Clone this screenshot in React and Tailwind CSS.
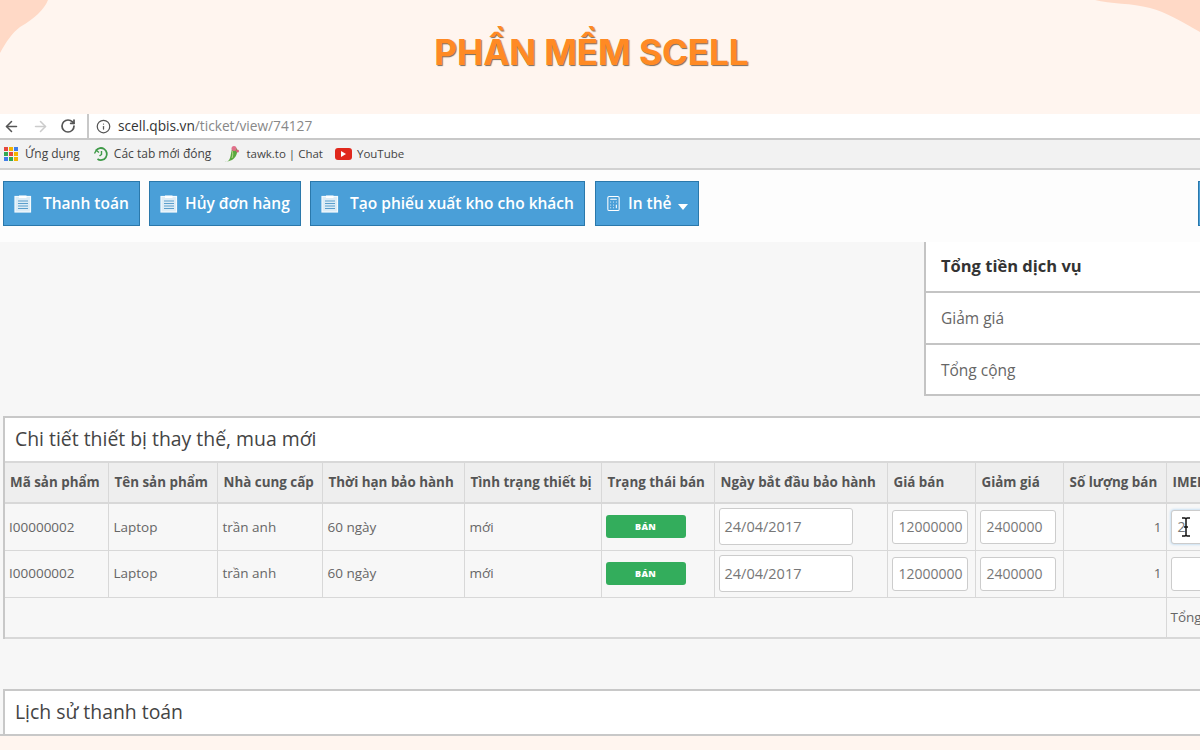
import { ArrowLeft, ArrowRight, Calculator, Info, RotateCw } from "lucide-react";

const columns = [103, 109, 105, 142, 137, 113, 173, 88, 88, 103, 140];
const headers = [
  "Mã sản phẩm",
  "Tên sản phẩm",
  "Nhà cung cấp",
  "Thời hạn bảo hành",
  "Tình trạng thiết bị",
  "Trạng thái bán",
  "Ngày bắt đầu bảo hành",
  "Giá bán",
  "Giảm giá",
  "Số lượng bán",
  "IMEI",
];
const actions = [
  { label: "Thanh toán", width: "w-[137px]", gap: "gap-[11px]" },
  { label: "Hủy đơn hàng", width: "w-[152px]", gap: "gap-[7px]" },
  { label: "Tạo phiếu xuất kho cho khách", width: "w-[275px]", gap: "gap-[11px]" },
];
const appColors = ["#e5483d", "#f4b400", "#3f7de8", "#34a853", "#e5483d", "#f4b400", "#3f7de8", "#34a853", "#f4b400"];

const ClipboardIcon = () => (
  <svg width="18" height="18" viewBox="0 0 18 18" fill="none" className="shrink-0">
    <rect x="1" y="1.5" width="15.5" height="15.5" fill="#dcecf6" stroke="#f4fafd" strokeWidth="1.2" />
    <rect x="5" y="0.5" width="7.5" height="2.5" fill="#ffffff" />
    <path d="M4 6h10M4 8.5h10M4 11h10M4 13.5h10" stroke="#5b9fcc" strokeWidth="1" />
  </svg>
);

const AppsIcon = () => (
  <div className="grid w-[14px] grid-cols-3 gap-[1px]">
    {appColors.map((color, i) => (
      <span key={i} className="h-[4px] w-[4px]" style={{ backgroundColor: color }} />
    ))}
  </div>
);

const HistoryIcon = () => (
  <svg width="16" height="16" viewBox="0 0 16 16" fill="none" stroke="#3f9a48" strokeWidth="1.8" className="shrink-0">
    <path d="M3 4.5A6 6 0 1 1 4.5 13" />
    <path d="M1.5 7.5 3.2 4.3 6 6.5" strokeWidth="1.4" />
    <path d="M8.5 5v3.5L6.5 10" strokeWidth="1.4" />
  </svg>
);

const TawkIcon = () => (
  <svg width="18" height="18" viewBox="0 0 18 18" className="shrink-0">
    <path d="M1 17c3 0 5-1 6-4 1-3 1-6 2-9 1-2 4-2 5 0 1 3-1 9-5 11-3 1-6 2-8 2Z" fill="#5aa83f" />
    <circle cx="11" cy="3.5" r="2.5" fill="#e0708a" />
    <circle cx="14.5" cy="6" r="1.5" fill="#d95f7f" />
    <path d="M9 6c1 2 1 4 0 7" stroke="#b9d98a" strokeWidth="1" fill="none" />
  </svg>
);

const YoutubeIcon = () => (
  <span className="flex h-[12px] w-[17px] shrink-0 items-center justify-center rounded-[3px] bg-[#e0281c]">
    <span className="h-0 w-0 border-y-[3px] border-l-[5px] border-y-transparent border-l-white" />
  </span>
);

const TextBox = ({ value, className }) => (
  <div className={`flex items-center rounded-[3px] border border-[#ccc] bg-white text-[#777] ${className}`}>
    {value}
  </div>
);

const Row = ({ focused }) => {
  const cell = "border-r border-b border-[#d8d8d8] align-middle text-[13.5px] text-[#666]";
  const textCell = `${cell} pl-[5px]`;
  const boxCell = `${cell} pl-[4px]`;
  return (
    <tr className="h-[47px]">
      <td className={`${cell} pl-[4px]`}>I00000002</td>
      <td className={textCell}>Laptop</td>
      <td className={textCell}>trần anh</td>
      <td className={textCell}>60 ngày</td>
      <td className={textCell}>mới</td>
      <td className={boxCell}>
        <div className="flex h-[23px] w-[80px] items-center justify-center rounded-[3px] bg-[#33ad5c] text-[9px] font-extrabold tracking-wide text-white">
          BÁN
        </div>
      </td>
      <td className={boxCell}>
        <TextBox value="24/04/2017" className="h-[37px] w-[134px] pl-[5px] text-[14.5px]" />
      </td>
      <td className={boxCell}>
        <TextBox value="12000000" className="h-[34px] w-[76px] pl-[6px] text-[14px]" />
      </td>
      <td className={boxCell}>
        <TextBox value="2400000" className="h-[34px] w-[76px] pl-[6px] text-[14px]" />
      </td>
      <td className={`${cell} pr-[4px] text-right`}>1</td>
      <td className={boxCell}>
        <TextBox
          value={focused ? "2" : ""}
          className={`h-[34px] w-[100px] pl-[6px] text-[14px] ${focused ? "border-[#7db4e6] shadow-[0_0_3px_#9cc8ee]" : ""}`}
        />
      </td>
    </tr>
  );
};

export default function App() {
  return (
    <div className="relative h-[750px] w-[1200px] overflow-hidden bg-[#fff5ef] font-['Open_Sans',sans-serif]">
      {/* corner blobs */}
      <svg width="60" height="60" viewBox="0 0 60 60" className="absolute left-0 top-0">
        <path d="M0 0H48C44 10 34 19 20 27 12 33 6 42 0 53Z" fill="#ffd9c6" />
      </svg>
      <svg width="110" height="40" viewBox="0 0 110 40" className="absolute right-0 top-0">
        <path d="M5 0C20 4 42 3 60 8 76 12 92 22 110 32V0Z" fill="#ffd9c6" />
      </svg>

      <div className="flex h-[114px] items-start justify-center pr-[17px] pt-[30px]">
        <h1 className="font-['Inter',sans-serif] text-[35px] leading-[44px] font-bold text-[#ff8a24] [text-shadow:1px_1px_1px_#7a6a5a]">
          PHẦN MỀM SCELL
        </h1>
      </div>

      {/* browser chrome */}
      <div className="flex h-[26px] items-center border-b-2 border-[#c8c8c8] bg-white">
        <div className="flex h-full w-[89px] items-center border-r-2 border-[#c8c8c8] pl-[3px] text-[#555]">
          <ArrowLeft size={17} strokeWidth={2.2} />
          <ArrowRight size={17} strokeWidth={2.2} className="ml-[12px] text-[#ccc]" />
          <RotateCw size={16} strokeWidth={2.6} className="ml-[11px]" />
        </div>
        <Info size={15} className="ml-[7px] text-[#555]" />
        <span className="ml-[7px] text-[13.7px] text-[#333]">
          scell.qbis.vn<span className="text-[#888]">/ticket/view/74127</span>
        </span>
      </div>
      <div className="flex h-[30px] items-center border-b-2 border-[#d2d2d2] bg-[#f2f2f2] pl-[4px] text-[12px] text-[#444]">
        <AppsIcon />
        <span className="ml-[7px]">Ứng dụng</span>
        <span className="ml-[13px]"><HistoryIcon /></span>
        <span className="ml-[5px]">Các tab mới đóng</span>
        <span className="ml-[12px]"><TawkIcon /></span>
        <span className="ml-[5px] text-[11.5px]">tawk.to | Chat</span>
        <span className="ml-[12px]"><YoutubeIcon /></span>
        <span className="ml-[5px] text-[11.5px]">YouTube</span>
      </div>

      {/* action bar */}
      <div className="flex h-[72px] items-start overflow-hidden bg-[#fdfdfd] pl-[3px] pt-[11px]">
        <div className="flex gap-[9px]">
          {actions.map((a) => (
            <div
              key={a.label}
              className={`flex h-[45px] items-center border border-[#2a78ab] bg-[#4a9fd8] pl-[10px] text-[15.5px] font-semibold text-white ${a.width} ${a.gap}`}
            >
              <ClipboardIcon />
              {a.label}
            </div>
          ))}
          <div className="ml-[1px] flex h-[45px] w-[104px] items-center border border-[#2a78ab] bg-[#4a9fd8] pl-[9px] text-[15.5px] font-semibold text-white">
            <Calculator size={17} strokeWidth={1.5} />
            <span className="ml-[6px]">In thẻ</span>
            <span className="ml-[6px] mt-[6px] h-0 w-0 border-x-[5px] border-t-[6px] border-x-transparent border-t-white" />
          </div>
          <div className="ml-[490px] h-[45px] w-[20px] shrink-0 border border-[#2a78ab] bg-[#4a9fd8]" />
        </div>
      </div>

      {/* page body */}
      <div className="h-[494px] overflow-hidden border-b-2 border-[#c8c8c8] bg-[#f7f7f7]">
        <div className="ml-[924px] h-[154px] border-b-2 border-l-2 border-[#c4c4c4] bg-white text-[15.5px] text-[#666]">
          <div className="flex h-[51px] items-center border-b-2 border-[#c4c4c4] pl-[15px] text-[16.5px] font-bold text-[#333]">
            Tổng tiền dịch vụ
          </div>
          <div className="flex h-[52px] items-center border-b-2 border-[#c4c4c4] pl-[15px] pt-[2px]">Giảm giá</div>
          <div className="flex h-[49px] items-center pl-[15px] pt-[2px]">Tổng cộng</div>
        </div>

        <div className="ml-[3px] mt-[20px] overflow-hidden border-l-2 border-t-2 border-[#c8c8c8]">
          <div className="flex h-[43px] items-center bg-white pb-[1px] pl-[10px] text-[19.4px] text-[#444]">
            Chi tiết thiết bị thay thế, mua mới
          </div>
          <table className="w-[1201px] table-fixed border-collapse">
            <colgroup>
              {columns.map((w, i) => (
                <col key={i} style={{ width: w }} />
              ))}
            </colgroup>
            <thead>
              <tr className="h-[41px] bg-[#eeeeee]">
                {headers.map((h) => (
                  <th
                    key={h}
                    className="border-y-2 border-r border-[#d8d8d8] pl-[6px] text-left text-[13.4px] font-bold whitespace-nowrap text-[#555] first:pl-[5px]"
                  >
                    {h}
                  </th>
                ))}
              </tr>
            </thead>
            <tbody>
              <Row focused />
              <Row />
              <tr className="h-[41px]">
                <td colSpan={10} className="border-r border-b-2 border-[#d8d8d8]" />
                <td className="border-b-2 border-[#d8d8d8] pl-[4px] text-[13.5px] text-[#666]">Tổng</td>
              </tr>
            </tbody>
          </table>
        </div>

        <div className="ml-[3px] mt-[50px] flex h-[46px] items-center border-l-2 border-t-2 border-[#c8c8c8] bg-white pb-[2px] pl-[10px] text-[19.4px] text-[#444]">
          Lịch sử thanh toán
        </div>
      </div>

      {/* mouse cursor over the IMEI input */}
      <svg width="10" height="20" viewBox="0 0 10 20" className="absolute left-[1181px] top-[517px]">
        <path d="M1 1h3l1 1 1-1h3M5 2v16M1 19h3l1-1 1 1h3M3 10h4" stroke="#111" strokeWidth="1.5" fill="none" />
      </svg>
    </div>
  );
}
